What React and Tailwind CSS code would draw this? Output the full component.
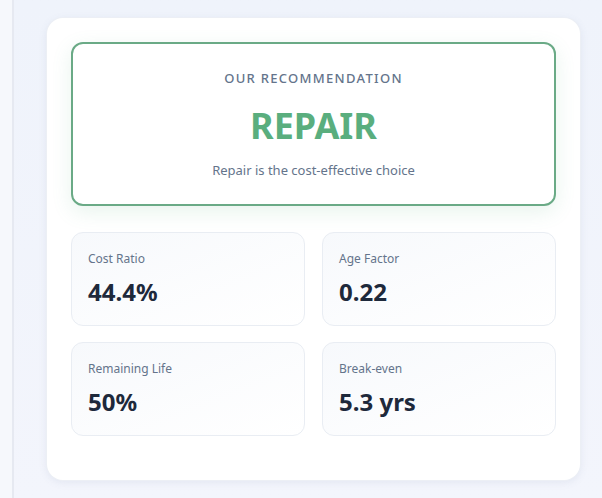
const metrics = [
  { label: 'Cost Ratio', value: '44.4%' },
  { label: 'Age Factor', value: '0.22' },
  { label: 'Remaining Life', value: '50%' },
  { label: 'Break-even', value: '5.3 yrs' },
];

const MetricCard = ({ label, value }) => (
  <div className="h-[94px] rounded-xl border border-[#e9edf3] bg-gradient-to-br from-[#f7f9fc] to-white px-4 pt-[18px]">
    <p className="text-[12px] leading-4 text-[#64748b]">{label}</p>
    <p className="mt-[9px] text-[24px] font-bold leading-8 text-[#1e293b]">{value}</p>
  </div>
);

export default function App() {
  return (
    <div
      className="flex h-[498px] w-[602px] overflow-hidden bg-[#f2f5fb]"
      style={{ fontFamily: '"Noto Sans", "Open Sans", sans-serif' }}
    >
      <div className="w-[12px] shrink-0 bg-[#f6f8fc]" />
      <div className="flex-1 border-l-2 border-[#e6e9f1] bg-gradient-to-b from-[#eff3fb] to-[#f3f5fc] pl-[33px] pt-[18px]">
        <div className="w-[533px] rounded-2xl bg-white px-6 pt-6 pb-[44px] shadow-[0_2px_8px_rgba(100,116,160,0.12)] ring-1 ring-[#eceff5]">
          <div className="flex h-[164px] flex-col items-center rounded-xl border-2 border-[#6aaa86] bg-white pt-[24px] shadow-[0_6px_20px_rgba(90,174,126,0.14)]">
            <p className="text-[13px] font-medium uppercase leading-5 tracking-[0.1em] text-[#64748b]">
              Our Recommendation
            </p>
            <p className="mt-[16px] text-[36px] font-bold leading-[44px] text-[#5aae7e]">REPAIR</p>
            <p className="mt-[12px] text-[13px] leading-5 text-[#64748b]">Repair is the cost-effective choice</p>
          </div>
          <div className="mt-[26px] grid grid-cols-2 gap-x-[17px] gap-y-[16px]">
            {metrics.map(m => (
              <MetricCard key={m.label} {...m} />
            ))}
          </div>
        </div>
      </div>
    </div>
  );
}
